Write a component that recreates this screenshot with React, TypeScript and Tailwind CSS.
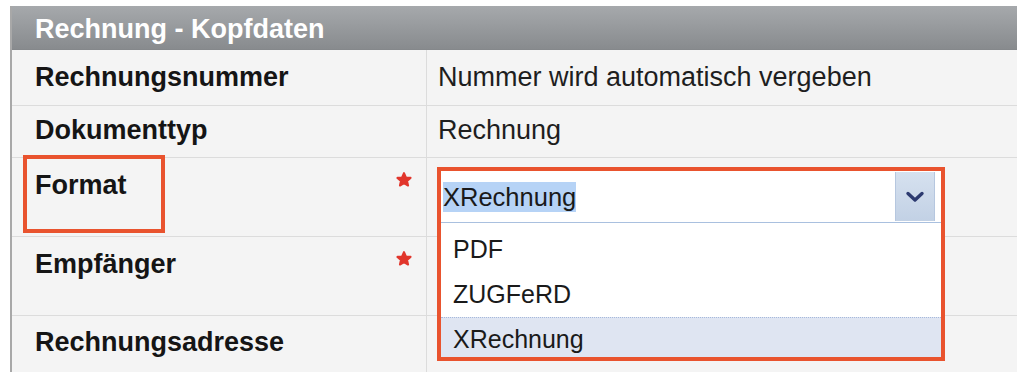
import React from "react";

const Star = () => (
  <svg width="16" height="16" viewBox="0 0 14 14" className="mt-[2px] shrink-0">
    <polygon
      points="7,1 8.65,4.73 12.71,5.15 9.66,7.87 10.53,11.85 7,9.8 3.47,11.85 4.34,7.87 1.29,5.15 5.35,4.73"
      fill="#e1362c"
      stroke="#e1362c"
      strokeWidth="1.8"
      strokeLinejoin="round"
    />
  </svg>
);

export default function App() {
  const label = "text-[27px] leading-[30px] font-bold text-[#151515]";
  const value = "text-[27px] leading-[30px] text-[#1e1e1e]";
  return (
    <div
      className="w-[1026px] h-[372px] bg-white overflow-hidden pt-[6px] pl-[10px]"
      style={{ fontFamily: '"Liberation Sans", Arial, sans-serif' }}
    >
      <div className="w-[1007px] h-[400px] border-l-2 border-[#a8a8a8] bg-[#f4f4f4]">
        {/* Header */}
        <div className="h-[44px] bg-linear-to-b from-[#a6a9ac] to-[#888b8e] pl-[23px] pt-[8px] border-b border-[#85888b]">
          <span className="text-[27px] leading-[30px] font-bold text-white">Rechnung - Kopfdaten</span>
        </div>

        {/* Row 1 */}
        <div className="flex h-[55px]">
          <div className="w-[414px] pl-[23px] pr-[15px] pt-[12px]">
            <span className={label}>Rechnungsnummer</span>
          </div>
          <div className="flex-1 border-l border-[#dcdcdc] pl-[11px] pt-[12px]">
            <span className={value}>Nummer wird automatisch vergeben</span>
          </div>
        </div>

        {/* Row 2 */}
        <div className="flex h-[52px] border-t border-[#dcdcdc]">
          <div className="w-[414px] pl-[23px] pr-[15px] pt-[9px]">
            <span className={label}>Dokumenttyp</span>
          </div>
          <div className="flex-1 border-l border-[#dcdcdc] pl-[11px] pt-[9px]">
            <span className={value}>Rechnung</span>
          </div>
        </div>

        {/* Row 3 - Format */}
        <div className="flex h-[79px] border-t border-[#dcdcdc]">
          <div className="relative w-[414px] pl-[23px] pr-[14px] pt-[12px] flex justify-between items-start">
            <span className={label}>Format</span>
            <Star />
            <div className="absolute left-[11px] top-[-3px] w-[142px] h-[78px] border-4 border-[#e9532e]" />
          </div>
          <div className="relative flex-1 border-l border-[#dcdcdc]">
            {/* Dropdown */}
            <div className="absolute left-[10px] top-[9px] z-10 w-[508px] h-[194px] border-4 border-[#e9532e] bg-white flex flex-col">
              <div className="h-[52px] flex items-center border-b border-[#a9c0df] bg-white">
                <div className="flex-1 pl-[2px] pt-[1px]">
                  <span className="text-[25.5px] leading-[30px] text-[#1a1a1a] bg-[#b6d3f6] inline-block">XRechnung</span>
                </div>
                <div className="w-[40px] h-[49px] mr-[6px] bg-linear-to-b from-[#d6e1ef] to-[#c2d1e5] border-x border-[#b6c7df] flex items-center justify-center">
                  <svg width="20" height="12" viewBox="0 0 20 12">
                    <path d="M3 2.5 L10 9 L17 2.5" fill="none" stroke="#2c3a70" strokeWidth="3.4" strokeLinecap="round" strokeLinejoin="round" />
                  </svg>
                </div>
              </div>
              <div className="flex-1 flex flex-col pt-[11px] text-[25px] leading-[30px] text-[#1a1a1a]">
                <div className="h-[45px] pl-[12px]">PDF</div>
                <div className="h-[38px] pl-[12px]">ZUGFeRD</div>
                <div className="flex-1 pl-[12px] pt-[6px] bg-[#dfe5f2] border-t border-dotted border-[#a6b9dc]">XRechnung</div>
              </div>
            </div>
          </div>
        </div>

        {/* Row 4 - Empfänger */}
        <div className="flex h-[79px] border-t border-[#dcdcdc]">
          <div className="w-[414px] pl-[23px] pr-[14px] pt-[12px] flex justify-between items-start">
            <span className={label}>Empfänger</span>
            <Star />
          </div>
          <div className="flex-1 border-l border-[#dcdcdc]" />
        </div>

        {/* Row 5 - Rechnungsadresse */}
        <div className="flex h-[79px] border-t border-[#dcdcdc]">
          <div className="w-[414px] pl-[23px] pr-[15px] pt-[11px]">
            <span className={label}>Rechnungsadresse</span>
          </div>
          <div className="flex-1 border-l border-[#dcdcdc]" />
        </div>
      </div>
    </div>
  );
}
